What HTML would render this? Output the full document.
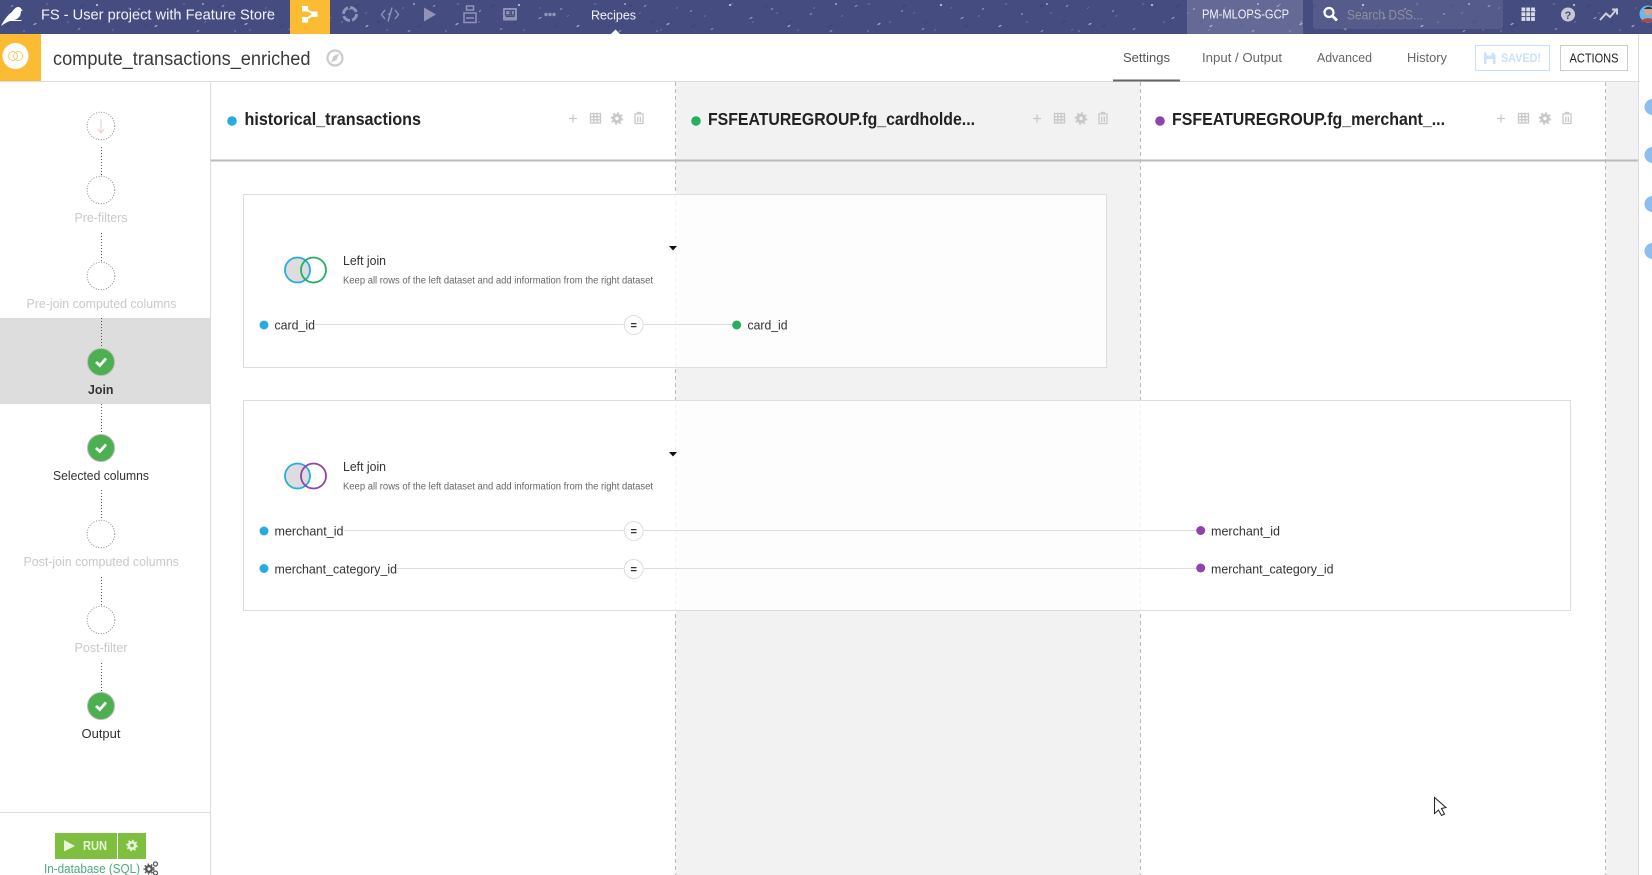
<!DOCTYPE html>
<html lang="en"><head><meta charset="utf-8"><title>compute_transactions_enriched</title>
<style>
html,body{margin:0;padding:0;background:#fff;width:1652px;height:875px;overflow:hidden}
svg{display:block;position:absolute;left:0;top:0}
text{font-family:"Liberation Sans",sans-serif;fill:#333}
.lbl{font-size:12.5px;text-anchor:start}
.off{fill:#c9c9c9}
.hd{font-size:17.5px;font-weight:bold;fill:#222}
.cond{font-size:12.5px;fill:#333}
.tab{font-size:12.5px;fill:#666}
.ico{fill:none;stroke:#c8c8c8;stroke-width:1.3}
.top{fill:#9194b8}
</style></head><body>
<svg width="1652" height="875" viewBox="0 0 1652 875" xmlns="http://www.w3.org/2000/svg">
<defs>
<pattern id="st" width="211" height="34" patternUnits="userSpaceOnUse">
<rect width="211" height="34" fill="#454c80"/>
<g fill="#dfe3f5">
<ellipse cx="12" cy="6" rx="1.6" ry=".6" opacity=".5" transform="rotate(-30 12 6)"/>
<ellipse cx="35" cy="24" rx="1.8" ry=".7" opacity=".6" transform="rotate(-30 35 24)"/>
<ellipse cx="58" cy="11" rx="1.4" ry=".6" opacity=".45" transform="rotate(-40 58 11)"/>
<ellipse cx="79" cy="29" rx="1.5" ry=".6" opacity=".5" transform="rotate(-25 79 29)"/>
<ellipse cx="97" cy="5" rx="1.2" ry="1" opacity=".8"/>
<ellipse cx="118" cy="18" rx="1.8" ry=".6" opacity=".55" transform="rotate(-30 118 18)"/>
<ellipse cx="139" cy="9" rx="1.4" ry=".6" opacity=".5" transform="rotate(-35 139 9)"/>
<ellipse cx="156" cy="26" rx="1.7" ry=".7" opacity=".6" transform="rotate(-30 156 26)"/>
<ellipse cx="178" cy="14" rx="1.3" ry=".6" opacity=".5" transform="rotate(-20 178 14)"/>
<ellipse cx="198" cy="31" rx="1.6" ry=".6" opacity=".5" transform="rotate(-30 198 31)"/>
<ellipse cx="203" cy="4" rx="1" ry=".9" opacity=".7"/>
<ellipse cx="24" cy="31" rx="1" ry=".6" opacity=".4"/>
</g>
</pattern>
<pattern id="st2" width="137" height="34" patternUnits="userSpaceOnUse">
<g fill="#c9cfea">
<ellipse cx="20" cy="16" rx="1.3" ry=".5" opacity=".35" transform="rotate(-30 20 16)"/>
<ellipse cx="47" cy="4" rx="1.5" ry=".5" opacity=".35" transform="rotate(-30 47 4)"/>
<ellipse cx="68" cy="22" rx="1.2" ry=".5" opacity=".4" transform="rotate(-30 68 22)"/>
<ellipse cx="92" cy="13" rx="1.5" ry=".5" opacity=".3" transform="rotate(-30 92 13)"/>
<ellipse cx="113" cy="30" rx="1.3" ry=".5" opacity=".35" transform="rotate(-30 113 30)"/>
<ellipse cx="129" cy="8" rx="1.2" ry=".5" opacity=".35" transform="rotate(-30 129 8)"/>
</g>
<g fill="#343a68">
<ellipse cx="8" cy="26" rx="3" ry="1" opacity=".35" transform="rotate(-30 8 26)"/>
<ellipse cx="82" cy="6" rx="3" ry="1" opacity=".35" transform="rotate(-30 82 6)"/>
<ellipse cx="105" cy="22" rx="3" ry="1" opacity=".3" transform="rotate(-30 105 22)"/>
</g>
</pattern>
</defs>

<!-- top bar -->
<rect width="1652" height="34" fill="url(#st)"/>
<rect width="1652" height="34" fill="url(#st2)"/>
<path d="M1 26C5 18 9 14 12 12C14 9 16 7 18 7C20 7 21 8 21.5 9.5L23 10.2L21 11C21 15 19 19 14 20L21.5 20V21L10 21C7 22 4 24 1 26Z" fill="#fff"/>
<text x="41" y="19.5" font-size="15" style="fill:#f2f2f6" textLength="234" lengthAdjust="spacingAndGlyphs">FS - User project with Feature Store</text>
<rect x="290" width="40" height="34" fill="#fbbc34"/>
<g fill="#fff"><rect x="302" y="6" width="6" height="5.500"/><rect x="302" y="17" width="6" height="5.500"/><rect x="311.500" y="11.500" width="6" height="5.500"/></g>
<path d="M305 9L314 14L305 20" fill="none" stroke="#fff" stroke-width="2"/>
<circle cx="350" cy="14" r="6.500" fill="none" stroke="#9194b8" stroke-width="3" stroke-dasharray="8 2.200"/>
<path d="M385 10L381.500 14.500L385 19M395 10L398.500 14.500L395 19M392 7.500L388 21.500" fill="none" stroke="#9194b8" stroke-width="1.400"/>
<path d="M424 7.500L436 14.500L424 21.500Z" class="top"/>
<path d="M466.500 6H473.500V10H466.500ZM464 13H476V22.500H464ZM466 18H474" fill="none" stroke="#9194b8" stroke-width="1.500"/>
<rect x="503" y="8" width="14" height="12.500" rx="1" class="top"/>
<path d="M505.500 10.500H510V15H505.500ZM505.500 16.500H514.500M511.500 10.500H514.500V15H511.500Z" fill="none" stroke="#454c80" stroke-width="1.200"/>
<g class="top"><circle cx="546" cy="14.500" r="1.700"/><circle cx="550" cy="14.500" r="1.700"/><circle cx="554" cy="14.500" r="1.700"/></g>
<text x="591" y="19.500" font-size="13" style="fill:#f2f2f6" textLength="45" lengthAdjust="spacingAndGlyphs">Recipes</text>
<path d="M611 34L615.500 29.500L620 34Z" fill="#fff"/>
<rect x="1187" width="116" height="34" fill="#fff" opacity=".17"/>
<text x="1202" y="18.500" font-size="12.500" style="fill:#f2f2f6" textLength="87" lengthAdjust="spacingAndGlyphs">PM-MLOPS-GCP</text>
<rect x="1313" y="-3" width="190" height="32" rx="3" fill="#fff" opacity=".09"/>
<circle cx="1329" cy="12.500" r="4.500" fill="none" stroke="#fff" stroke-width="2.200"/>
<path d="M1332.500 16L1337 20.500" stroke="#fff" stroke-width="2.800"/>
<text x="1347" y="19.500" font-size="14" style="fill:#8d8f9f" textLength="76" lengthAdjust="spacingAndGlyphs">Search DSS...</text>
<g fill="#dcdce6"><rect x="1521.500" y="7.500" width="3.800" height="3.800"/><rect x="1526.300" y="7.500" width="3.800" height="3.800"/><rect x="1531.100" y="7.500" width="3.800" height="3.800"/><rect x="1521.500" y="12.300" width="3.800" height="3.800"/><rect x="1526.300" y="12.300" width="3.800" height="3.800"/><rect x="1531.100" y="12.300" width="3.800" height="3.800"/><rect x="1521.500" y="17.100" width="3.800" height="3.800"/><rect x="1526.300" y="17.100" width="3.800" height="3.800"/><rect x="1531.100" y="17.100" width="3.800" height="3.800"/></g>
<circle cx="1568" cy="14.500" r="7" fill="#c9c9d6"/>
<text x="1568" y="19" font-size="11" font-weight="bold" text-anchor="middle" style="fill:#454c80">?</text>
<path d="M1600 20L1606 13.500L1610 17L1616 10M1612 9.500H1617V14.500" fill="none" stroke="#d0d0de" stroke-width="2"/>
<circle cx="1648" cy="14" r="8.500" fill="#6db8e8"/>
<circle cx="1648" cy="12" r="3.500" fill="#e0a080"/>
<path d="M1641 22C1642 17 1654 17 1655 22Z" fill="#b5473a"/>
<path d="M1644 9C1646 6 1652 6 1652 9Z" fill="#333"/>

<!-- header -->
<rect y="34" width="1652" height="47" fill="#fff"/>
<rect y="34" width="41" height="47" fill="#fbbc34"/>
<circle cx="15.500" cy="56" r="13" fill="#fff"/>
<circle cx="13" cy="56" r="4.500" fill="none" stroke="#fbcb6a" stroke-width="1"/>
<circle cx="18" cy="56" r="4.500" fill="none" stroke="#fbcb6a" stroke-width="1"/>
<text x="53" y="65" font-size="19" style="fill:#3a3a3a" textLength="257.500" lengthAdjust="spacingAndGlyphs">compute_transactions_enriched</text>
<circle cx="335" cy="58" r="7.500" fill="none" stroke="#ccc" stroke-width="2.200"/>
<path d="M339 53.500L336.500 60L331 62.500L333.500 56Z" fill="#ccc"/>
<text x="1123" y="62" class="tab" style="fill:#555" textLength="47" lengthAdjust="spacingAndGlyphs">Settings</text>
<text x="1202" y="62" class="tab" textLength="80" lengthAdjust="spacingAndGlyphs">Input / Output</text>
<text x="1317" y="62" class="tab" textLength="55" lengthAdjust="spacingAndGlyphs">Advanced</text>
<text x="1407" y="62" class="tab" textLength="40" lengthAdjust="spacingAndGlyphs">History</text>
<rect x="1475.500" y="45.500" width="74" height="25" fill="#fff" stroke="#c5e0fb"/>
<path d="M1484 52.500H1493L1495.500 55V64H1484Z" fill="#c9e2fb"/>
<rect x="1486.500" y="59" width="6.500" height="5" fill="#fff"/>
<rect x="1486.500" y="52.500" width="5" height="3" fill="#fff"/>
<text x="1501" y="62" font-size="12" font-weight="bold" style="fill:#c9e2fb" textLength="40" lengthAdjust="spacingAndGlyphs">SAVED!</text>
<rect x="1560.500" y="45.500" width="67" height="25" fill="#fff" stroke="#ccc"/>
<text x="1569.500" y="62.500" font-size="12.500" style="fill:#222" textLength="49" lengthAdjust="spacingAndGlyphs">ACTIONS</text>
<rect y="81" width="1640" height="1" fill="#ddd"/>
<rect x="1113" y="79.500" width="67" height="2" fill="#666"/>

<!-- columns -->
<rect x="676" y="82" width="464" height="793" fill="#f2f2f2"/>
<rect x="1606" y="82" width="33" height="793" fill="#f2f2f2"/>
<path d="M675.500 82V875M1140.500 82V875M1605.500 82V875" stroke="#bbb" stroke-width="1" stroke-dasharray="4 3" fill="none"/>
<rect x="211" y="159.500" width="1428" height="2" fill="#bbb"/>
<rect x="1638" y="34" width="1" height="841" fill="#ddd"/>
<g fill="#8fbdf0"><circle cx="1652.500" cy="107" r="8"/><circle cx="1652.500" cy="155" r="8"/><circle cx="1652.500" cy="204" r="8"/><circle cx="1652.500" cy="251" r="8"/></g>

<circle cx="232" cy="121" r="4.800" fill="#29abe2"/>
<text x="244.500" y="125" class="hd" textLength="176.500" lengthAdjust="spacingAndGlyphs">historical_transactions</text>
<circle cx="696" cy="121" r="4.800" fill="#27ae60"/>
<text x="708" y="125" class="hd" textLength="267" lengthAdjust="spacingAndGlyphs">FSFEATUREGROUP.fg_cardholde...</text>
<circle cx="1160" cy="121" r="4.800" fill="#8e44ad"/>
<text x="1172" y="125" class="hd" textLength="273" lengthAdjust="spacingAndGlyphs">FSFEATUREGROUP.fg_merchant_...</text>

<g>
<path d="M569 118.500H577M573 114.500V122.500" class="ico"/>
<path d="M590.500 113.500H600.500V123H590.500ZM590.500 116.700H600.500M590.500 119.800H600.500M593.800 113.500V123M597.200 113.500V123" class="ico"/>
<circle cx="617" cy="118.500" r="3.200" fill="none" stroke="#c8c8c8" stroke-width="3"/><circle cx="617" cy="118.500" r="5.500" fill="none" stroke="#c8c8c8" stroke-width="1.600" stroke-dasharray="2 2.300"/>
<path d="M635 115V123.500H643V115M634 114H644M637.500 114V112.500H640.500V114M637.700 116.500V122M640.300 116.500V122" class="ico"/>
</g>
<g transform="translate(464 0)">
<path d="M569 118.500H577M573 114.500V122.500" class="ico"/>
<path d="M590.500 113.500H600.500V123H590.500ZM590.500 116.700H600.500M590.500 119.800H600.500M593.800 113.500V123M597.200 113.500V123" class="ico"/>
<circle cx="617" cy="118.500" r="3.200" fill="none" stroke="#c8c8c8" stroke-width="3"/><circle cx="617" cy="118.500" r="5.500" fill="none" stroke="#c8c8c8" stroke-width="1.600" stroke-dasharray="2 2.300"/>
<path d="M635 115V123.500H643V115M634 114H644M637.500 114V112.500H640.500V114M637.700 116.500V122M640.300 116.500V122" class="ico"/>
</g>
<g transform="translate(928 0)">
<path d="M569 118.500H577M573 114.500V122.500" class="ico"/>
<path d="M590.500 113.500H600.500V123H590.500ZM590.500 116.700H600.500M590.500 119.800H600.500M593.800 113.500V123M597.200 113.500V123" class="ico"/>
<circle cx="617" cy="118.500" r="3.200" fill="none" stroke="#c8c8c8" stroke-width="3"/><circle cx="617" cy="118.500" r="5.500" fill="none" stroke="#c8c8c8" stroke-width="1.600" stroke-dasharray="2 2.300"/>
<path d="M635 115V123.500H643V115M634 114H644M637.500 114V112.500H640.500V114M637.700 116.500V122M640.300 116.500V122" class="ico"/>
</g>

<!-- join box 1 -->
<rect x="243.500" y="194.500" width="863" height="173" fill="#fff" fill-opacity=".8" stroke="#ddd" stroke-width="1"/>
<circle cx="297.500" cy="270" r="12.500" fill="#ddd" stroke="#29abe2" stroke-width="1.800"/>
<circle cx="313.500" cy="270" r="12.500" fill="none" stroke="#27ae60" stroke-width="1.800"/>
<text x="343" y="265" font-size="12.500" style="fill:#333" textLength="43" lengthAdjust="spacingAndGlyphs">Left join</text>
<text x="343" y="283.500" font-size="10" style="fill:#666" textLength="310" lengthAdjust="spacingAndGlyphs">Keep all rows of the left dataset and add information from the right dataset</text>
<path d="M669 246H677L673 250.500Z" fill="#111"/>
<path d="M315 324.500H623.500M644 324.500H733" stroke="#ddd" stroke-width="1"/>
<circle cx="264" cy="325" r="4.500" fill="#29abe2"/>
<text x="274.500" y="329.500" class="cond" textLength="40.500" lengthAdjust="spacingAndGlyphs">card_id</text>
<circle cx="633.700" cy="325" r="9.500" fill="#fff" stroke="#ddd"/>
<text x="633.700" y="329" font-size="11" font-weight="bold" text-anchor="middle" style="fill:#333">=</text>
<circle cx="736.700" cy="325" r="4.500" fill="#27ae60"/>
<text x="747.500" y="329.500" class="cond" textLength="40" lengthAdjust="spacingAndGlyphs">card_id</text>

<!-- join box 2 -->
<rect x="243.500" y="400.500" width="1327" height="210" fill="#fff" fill-opacity=".8" stroke="#ddd" stroke-width="1"/>
<circle cx="297.500" cy="476" r="12.500" fill="#ddd" stroke="#29abe2" stroke-width="1.800"/>
<circle cx="313.500" cy="476" r="12.500" fill="none" stroke="#8e44ad" stroke-width="1.800"/>
<text x="343" y="471" font-size="12.500" style="fill:#333" textLength="43" lengthAdjust="spacingAndGlyphs">Left join</text>
<text x="343" y="489.500" font-size="10" style="fill:#666" textLength="310" lengthAdjust="spacingAndGlyphs">Keep all rows of the left dataset and add information from the right dataset</text>
<path d="M669 452H677L673 456.500Z" fill="#111"/>
<path d="M344 530.500H623.500M644 530.500H1197M397 568.500H623.500M644 568.500H1197" stroke="#ddd" stroke-width="1"/>
<circle cx="264" cy="531" r="4.500" fill="#29abe2"/>
<text x="274.500" y="535.500" class="cond" textLength="69" lengthAdjust="spacingAndGlyphs">merchant_id</text>
<circle cx="633.700" cy="531" r="9.500" fill="#fff" stroke="#ddd"/>
<text x="633.700" y="535" font-size="11" font-weight="bold" text-anchor="middle" style="fill:#333">=</text>
<circle cx="1200.700" cy="530.500" r="4.500" fill="#8e44ad"/>
<text x="1211" y="535.500" class="cond" textLength="69" lengthAdjust="spacingAndGlyphs">merchant_id</text>
<circle cx="264" cy="568.500" r="4.500" fill="#29abe2"/>
<text x="274.500" y="573.500" class="cond" textLength="122.500" lengthAdjust="spacingAndGlyphs">merchant_category_id</text>
<circle cx="633.700" cy="569" r="9.500" fill="#fff" stroke="#ddd"/>
<text x="633.700" y="573" font-size="11" font-weight="bold" text-anchor="middle" style="fill:#333">=</text>
<circle cx="1200.700" cy="568" r="4.500" fill="#8e44ad"/>
<text x="1211" y="573.500" class="cond" textLength="122.500" lengthAdjust="spacingAndGlyphs">merchant_category_id</text>

<!-- sidebar -->
<rect x="210" y="82" width="1" height="793" fill="#ddd"/>
<rect y="318" width="210" height="86" fill="#ddd"/>
<path d="M101.500 147V176M101.500 233V262M101.500 318V348M101.500 404V434M101.500 490V520M101.500 577V606M101.500 663V692" stroke="#555" stroke-width="1" stroke-dasharray="1 2" fill="none"/>
<g fill="#fff" stroke="#888" stroke-width="1" stroke-dasharray="1 1.600">
<circle cx="101" cy="126" r="13.800"/><circle cx="101" cy="190" r="13.800"/><circle cx="101" cy="276" r="13.800"/><circle cx="101" cy="534" r="13.800"/><circle cx="101" cy="620" r="13.800"/>
</g>
<path d="M101 119V132M98 129L101 133L104 129" fill="none" stroke="#e8cfc0" stroke-width="1"/>
<g font-size="12">
<text x="74.500" y="222" class="lbl off" textLength="53" lengthAdjust="spacingAndGlyphs">Pre-filters</text>
<text x="26.500" y="308" class="lbl off" textLength="150" lengthAdjust="spacingAndGlyphs">Pre-join computed columns</text>
<text x="88" y="394" font-size="12.500" font-weight="bold" style="fill:#333" textLength="25.500" lengthAdjust="spacingAndGlyphs">Join</text>
<text x="53" y="480" class="lbl" textLength="96" lengthAdjust="spacingAndGlyphs">Selected columns</text>
<text x="23.500" y="566" class="lbl off" textLength="155.500" lengthAdjust="spacingAndGlyphs">Post-join computed columns</text>
<text x="74.500" y="652" class="lbl off" textLength="53" lengthAdjust="spacingAndGlyphs">Post-filter</text>
<text x="81.500" y="738" class="lbl" textLength="39" lengthAdjust="spacingAndGlyphs">Output</text>
</g>
<g fill="#4caf50" stroke="#bbb" stroke-width="1"><circle cx="101" cy="362" r="13.500"/><circle cx="101" cy="448" r="13.500"/><circle cx="101" cy="706" r="13.500"/></g>
<path d="M96 362L99.800 365.500L106 358.500M96 448L99.800 451.500L106 444.500M96 706L99.800 709.500L106 702.500" fill="none" stroke="#fff" stroke-width="2.800"/>
<rect y="812" width="210" height="1" fill="#ddd"/>
<rect x="55" y="833" width="62" height="26" fill="#7fbf3f"/>
<rect x="118" y="833" width="28" height="26" fill="#7fbf3f"/>
<path d="M64 840V851.500L75 846Z" fill="#e8f5dc"/>
<text x="83" y="850" font-size="12.500" font-weight="bold" style="fill:#e8f5dc" textLength="24" lengthAdjust="spacingAndGlyphs">RUN</text>
<circle cx="132" cy="845.500" r="3.200" fill="none" stroke="#e8f5dc" stroke-width="2.600"/>
<circle cx="132" cy="845.500" r="5" fill="none" stroke="#e8f5dc" stroke-width="1.500" stroke-dasharray="1.800 2.100"/>
<text x="44" y="873" font-size="12.500" style="fill:#4aab7c" textLength="96" lengthAdjust="spacingAndGlyphs">In-database (SQL)</text>
<circle cx="149" cy="869" r="2.800" fill="none" stroke="#555" stroke-width="2.400"/>
<circle cx="149" cy="869" r="4.800" fill="none" stroke="#555" stroke-width="1.400" stroke-dasharray="1.600 1.900"/>
<circle cx="155.500" cy="864" r="2" fill="none" stroke="#555" stroke-width="1.200"/>
<circle cx="155.500" cy="873" r="2" fill="none" stroke="#555" stroke-width="1.200"/>

<!-- cursor -->
<path d="M1434.500 797.500V813.500L1438.500 810L1441.500 815.500L1444.500 814L1441.500 808.500L1446 807.500Z" fill="#fff" stroke="#222" stroke-width="1"/>
</svg>
</body></html>
